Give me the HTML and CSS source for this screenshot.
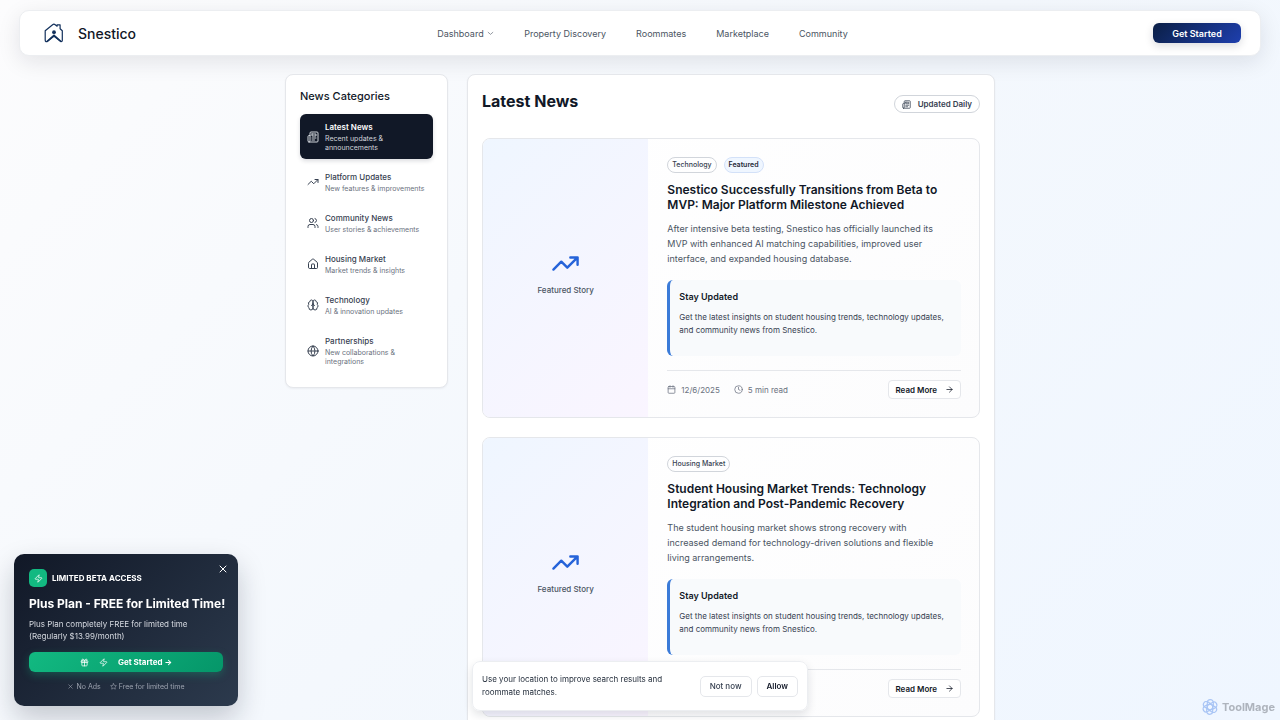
FILE: index.html
```html
<!DOCTYPE html>
<html lang="en">
<head>
    <meta charset="UTF-8">
    <meta name="viewport" content="width=device-width, initial-scale=1.0">
    <title>Latest News - Snestico</title>
    <link rel="stylesheet" href="styles.css">
</head>
<body>
    <!-- Icon sprite -->
    <svg class="sprite" aria-hidden="true">
        <symbol id="i-news" viewBox="0 0 24 24"><path d="M4 22h16a2 2 0 0 0 2-2V4a2 2 0 0 0-2-2H8a2 2 0 0 0-2 2v16a2 2 0 0 1-2 2Zm0 0a2 2 0 0 1-2-2v-9c0-1.1.9-2 2-2h2M18 14h-8M15 18h-5M10 6h8v4h-8V6Z"/></symbol>
        <symbol id="i-trend" viewBox="0 0 24 24"><path d="M22 7l-8.500 8.500-5-5L2 17M16 7h6v6"/></symbol>
        <symbol id="i-users" viewBox="0 0 24 24"><path d="M16 21v-2a4 4 0 0 0-4-4H6a4 4 0 0 0-4 4v2M22 21v-2a4 4 0 0 0-3-3.870M16 3.130a4 4 0 0 1 0 7.750"/><circle cx="9" cy="7" r="4"/></symbol>
        <symbol id="i-house" viewBox="0 0 24 24"><path d="M15 21v-8a1 1 0 0 0-1-1h-4a1 1 0 0 0-1 1v8M3 10a2 2 0 0 1 .709-1.528l7-5.999a2 2 0 0 1 2.582 0l7 5.999A2 2 0 0 1 21 10v9a2 2 0 0 1-2 2H5a2 2 0 0 1-2-2z"/></symbol>
        <symbol id="i-brain" viewBox="0 0 24 24"><path d="M12 5a3 3 0 1 0-5.997.125 4 4 0 0 0-2.526 5.770 4 4 0 0 0 .556 6.588A4 4 0 1 0 12 18ZM12 5a3 3 0 1 1 5.997.125 4 4 0 0 1 2.526 5.770 4 4 0 0 1-.556 6.588A4 4 0 1 1 12 18ZM15 13a4.500 4.500 0 0 1-3-4 4.500 4.500 0 0 1-3 4"/></symbol>
        <symbol id="i-globe" viewBox="0 0 24 24"><circle cx="12" cy="12" r="10"/><path d="M12 2a14.500 14.500 0 0 0 0 20 14.500 14.500 0 0 0 0-20M2 12h20"/></symbol>
        <symbol id="i-calendar" viewBox="0 0 24 24"><path d="M8 2v4M16 2v4M3 10h18"/><rect x="3" y="4" width="18" height="18" rx="2"/></symbol>
        <symbol id="i-clock" viewBox="0 0 24 24"><circle cx="12" cy="12" r="10"/><path d="M12 6v6l4 2"/></symbol>
        <symbol id="i-arrow" viewBox="0 0 24 24"><path d="M5 12h14M12 5l7 7-7 7"/></symbol>
        <symbol id="i-down" viewBox="0 0 24 24"><path d="M4 8l8 7 8-7"/></symbol>
        <symbol id="i-close" viewBox="0 0 24 24"><path d="M18 6L6 18M6 6l12 12"/></symbol>
        <symbol id="i-zap" viewBox="0 0 24 24"><path d="M4 14a1 1 0 0 1-.780-1.630l9.900-10.200a.5.5 0 0 1 .860.460l-1.920 6.020A1 1 0 0 0 13 10h7a1 1 0 0 1 .780 1.630l-9.900 10.200a.5.5 0 0 1-.860-.460l1.920-6.020A1 1 0 0 0 11 14z"/></symbol>
        <symbol id="i-gift" viewBox="0 0 24 24"><rect x="3" y="8" width="18" height="4" rx="1"/><path d="M12 8v13M19 12v7a2 2 0 0 1-2 2H7a2 2 0 0 1-2-2v-7M7.500 8a2.500 2.500 0 0 1 0-5A4.800 8 0 0 1 12 8a4.800 8 0 0 1 4.500-5 2.500 2.500 0 0 1 0 5"/></symbol>
        <symbol id="i-star" viewBox="0 0 24 24"><path d="M12 2l3.100 6.300 6.900 1-5 4.900 1.200 6.900L12 17.800l-6.200 3.300L7 14.200 2 9.300l6.900-1z"/></symbol>
    </svg>

    <header class="navbar">
        <a href="#" class="brand">
            <svg class="brand-logo" viewBox="0 0 20 20" aria-hidden="true">
                <path d="M1.200 7.800L8.600 1.700q1.300-1 2.600 0l1.900 1.500V1.800h3v3.900l2.200 2v9.500q0 1.700-1.500 1.400L10 12.600l-6.800 6q-2 .5-2-1.600z" fill="none" stroke="#12305c" stroke-width="1.200" stroke-linejoin="round"/>
                <path d="M2.400 17.900L10 11.300l7.600 6.600-1.500.9L10 13.900l-6.100 4.900z" fill="#12305c"/>
                <circle cx="10" cy="9.200" r="1.900" fill="#12305c"/>
            </svg>
            <span>Snestico</span>
        </a>
        <nav class="nav-links">
            <a href="#">Dashboard <svg class="icon icon-tiny"><use href="#i-down"/></svg></a>
            <a href="#">Property Discovery</a>
            <a href="#">Roommates</a>
            <a href="#">Marketplace</a>
            <a href="#">Community</a>
        </nav>
        <div class="nav-actions">
            <button type="button" class="btn-primary">Get Started</button>
        </div>
    </header>

    <div class="container">
        <aside class="sidebar">
            <h2>News Categories</h2>
            <button type="button" class="category active">
                <svg class="icon"><use href="#i-news"/></svg>
                <span><strong>Latest News</strong><small>Recent updates &amp; announcements</small></span>
            </button>
            <button type="button" class="category">
                <svg class="icon"><use href="#i-trend"/></svg>
                <span><strong>Platform Updates</strong><small>New features &amp; improvements</small></span>
            </button>
            <button type="button" class="category">
                <svg class="icon"><use href="#i-users"/></svg>
                <span><strong>Community News</strong><small>User stories &amp; achievements</small></span>
            </button>
            <button type="button" class="category">
                <svg class="icon"><use href="#i-house"/></svg>
                <span><strong>Housing Market</strong><small>Market trends &amp; insights</small></span>
            </button>
            <button type="button" class="category">
                <svg class="icon"><use href="#i-brain"/></svg>
                <span><strong>Technology</strong><small>AI &amp; innovation updates</small></span>
            </button>
            <button type="button" class="category">
                <svg class="icon"><use href="#i-globe"/></svg>
                <span><strong>Partnerships</strong><small>New collaborations &amp; integrations</small></span>
            </button>
        </aside>

        <main class="news">
            <div class="news-header">
                <h1>Latest News</h1>
                <span class="updated"><svg class="icon icon-small"><use href="#i-news"/></svg>Updated Daily</span>
            </div>

            <article class="story">
                <div class="story-cover">
                    <svg class="icon"><use href="#i-trend"/></svg>
                    <span>Featured Story</span>
                </div>
                <div class="story-body">
                    <div class="tags">
                        <span class="tag">Technology</span>
                        <span class="tag featured">Featured</span>
                    </div>
                    <h3>Snestico Successfully Transitions from Beta to MVP: Major Platform Milestone Achieved</h3>
                    <p class="summary">After intensive beta testing, Snestico has officially launched its MVP with enhanced AI matching capabilities, improved user interface, and expanded housing database.</p>
                    <div class="callout">
                        <h4>Stay Updated</h4>
                        <p>Get the latest insights on student housing trends, technology updates, and community news from Snestico.</p>
                    </div>
                    <div class="story-footer">
                        <span class="meta"><svg class="icon"><use href="#i-calendar"/></svg>12/6/2025</span>
                        <span class="meta"><svg class="icon"><use href="#i-clock"/></svg>5 min read</span>
                        <button type="button" class="read-more">Read More <svg class="icon"><use href="#i-arrow"/></svg></button>
                    </div>
                </div>
            </article>

            <article class="story">
                <div class="story-cover">
                    <svg class="icon"><use href="#i-trend"/></svg>
                    <span>Featured Story</span>
                </div>
                <div class="story-body">
                    <div class="tags">
                        <span class="tag">Housing Market</span>
                    </div>
                    <h3>Student Housing Market Trends: Technology Integration and Post-Pandemic Recovery</h3>
                    <p class="summary">The student housing market shows strong recovery with increased demand for technology-driven solutions and flexible living arrangements.</p>
                    <div class="callout">
                        <h4>Stay Updated</h4>
                        <p>Get the latest insights on student housing trends, technology updates, and community news from Snestico.</p>
                    </div>
                    <div class="story-footer">
                        <button type="button" class="read-more">Read More <svg class="icon"><use href="#i-arrow"/></svg></button>
                    </div>
                </div>
            </article>
        </main>
    </div>

    <!-- Beta promo -->
    <section class="promo">
        <button type="button" class="promo-close" aria-label="Close"><svg class="icon"><use href="#i-close"/></svg></button>
        <div class="promo-label">
            <span class="promo-icon"><svg class="icon icon-small"><use href="#i-zap"/></svg></span>
            LIMITED BETA ACCESS
        </div>
        <h2>Plus Plan - FREE for Limited Time!</h2>
        <p>Plus Plan completely FREE for limited time (Regularly $13.99/month)</p>
        <button type="button" class="promo-btn">
            <svg class="icon icon-small"><use href="#i-gift"/></svg>
            <svg class="icon icon-small"><use href="#i-zap"/></svg>
            <span>Get Started →</span>
        </button>
        <div class="promo-notes">
            <span><svg class="icon icon-tiny"><use href="#i-close"/></svg>No Ads</span>
            <span><svg class="icon icon-tiny"><use href="#i-star"/></svg>Free for limited time</span>
        </div>
    </section>

    <!-- Location prompt -->
    <div class="location" role="dialog" aria-label="Location">
        <p>Use your location to improve search results and roommate matches.</p>
        <button type="button">Not now</button>
        <button type="button" class="allow">Allow</button>
    </div>

    <div class="watermark">
        <svg viewBox="0 0 24 24" aria-hidden="true">
            <g fill="none" stroke="currentColor" stroke-width="1.800">
                <path id="petal" d="M12 7l5 3V5.500A4.500 4.500 0 0 0 8 5.500V14"/>
                <use href="#petal" transform="rotate(60 12 12)"/>
                <use href="#petal" transform="rotate(120 12 12)"/>
                <use href="#petal" transform="rotate(180 12 12)"/>
                <use href="#petal" transform="rotate(240 12 12)"/>
                <use href="#petal" transform="rotate(300 12 12)"/>
            </g>
        </svg>
        ToolMage
    </div>
</body>
</html>
```
FILE: styles.css
```css
* {
    box-sizing: border-box;
}

body {
    margin: 0;
    min-height: 100vh;
    font-family: Inter, "Liberation Sans", sans-serif;
    font-size: 9px;
    color: #111827;
    background: linear-gradient(135deg, #fcfcfd 0%, #f4f8fd 50%, #eff6ff 100%) fixed;
}

h1, h2, h3, h4, p {
    margin: 0;
}

button {
    font-family: inherit;
    cursor: pointer;
}

a {
    color: inherit;
    text-decoration: none;
}

.sprite {
    position: absolute;
    width: 0;
    height: 0;
}

.icon {
    width: 12px;
    height: 12px;
    flex-shrink: 0;
    fill: none;
    stroke: currentColor;
    stroke-width: 2;
    stroke-linecap: round;
    stroke-linejoin: round;
}

.icon-small {
    width: 9px;
    height: 9px;
}

.icon-tiny {
    width: 7px;
    height: 7px;
}

/* Navbar */
.navbar {
    display: grid;
    grid-template-columns: 1fr auto 1fr;
    align-items: center;
    height: 46px;
    margin: 10px 19px 18px;
    padding: 0 19px 0 24px;
    background: #fff;
    border: 1px solid #eceef1;
    border-radius: 10px;
    box-shadow: 0 6px 22px rgba(15, 23, 42, 0.1);
}

.brand {
    display: flex;
    align-items: center;
    gap: 14px;
    font-size: 14px;
    font-weight: 500;
}

.brand-logo {
    width: 20px;
    height: 20px;
}

.nav-links {
    display: flex;
    gap: 30px;
    color: #4b5563;
}

.nav-links .icon {
    margin-left: 1px;
}

.nav-actions {
    display: flex;
    justify-content: flex-end;
}

.btn-primary {
    width: 88px;
    height: 20px;
    padding: 0;
    border: 0;
    border-radius: 6px;
    background: linear-gradient(135deg, #0b1f45, #1e3fae);
    color: #fff;
    font-size: 9px;
    font-weight: 600;
    box-shadow: 0 3px 8px rgba(15, 23, 42, 0.15);
}

/* Layout */
.container {
    display: grid;
    grid-template-columns: 163px 1fr;
    align-items: start;
    gap: 19px;
    max-width: 710px;
    margin: 0 auto;
}

.sidebar,
.news {
    padding: 14px;
    background: #fff;
    border: 1px solid #e5e7eb;
    border-radius: 8px;
    box-shadow: 0 1px 2px rgba(15, 23, 42, 0.05);
}

/* Sidebar */
.sidebar {
    display: flex;
    flex-direction: column;
    gap: 5px;
}

.sidebar h2 {
    margin-bottom: 5px;
    font-size: 11px;
    line-height: 15px;
    font-weight: 500;
}

.category {
    display: flex;
    align-items: center;
    gap: 6px;
    padding: 7px;
    border: 0;
    border-radius: 6px;
    background: none;
    color: #374151;
    text-align: left;
}

.category strong,
.category small {
    display: block;
}

.category strong {
    font-size: 8px;
    line-height: 13px;
    font-weight: 500;
}

.category small {
    font-size: 7px;
    line-height: 9px;
    color: #6b7280;
}

.category.active {
    background: #111827;
    color: #fff;
    box-shadow: 0 2px 4px rgba(15, 23, 42, 0.15);
}

.category.active strong {
    font-weight: 600;
}

.category.active small,
.category.active .icon {
    color: #d1d5db;
}

/* News list */
.news-header {
    display: flex;
    align-items: center;
    justify-content: space-between;
    margin-bottom: 19px;
    height: 30px;
}

.news-header h1 {
    align-self: flex-start;
    font-size: 16px;
    line-height: 24px;
    font-weight: 700;
}

.updated {
    display: flex;
    align-items: center;
    gap: 7px;
    height: 18px;
    padding: 0 7px;
    border: 1px solid #d1d5db;
    border-radius: 9px;
    color: #374151;
    font-size: 8px;
    font-weight: 600;
}

.story {
    display: grid;
    grid-template-columns: 1fr 2fr;
    border: 1px solid #e5e7eb;
    border-radius: 8px;
    overflow: hidden;
    background: linear-gradient(135deg, #fff, #fcfcfd);
}

.story + .story {
    margin-top: 19px;
}

.story-cover {
    display: flex;
    flex-direction: column;
    align-items: center;
    justify-content: center;
    gap: 6px;
    padding-bottom: 10px;
    background: linear-gradient(135deg, #eff6ff, #faf5ff);
    color: #4b5563;
    font-size: 8px;
    line-height: 13px;
    font-weight: 500;
}

.story-cover .icon {
    width: 29px;
    height: 29px;
    color: #2563d9;
}

.story-body {
    padding: 18px 18px 18px 19px;
}

.tags {
    display: flex;
    gap: 7px;
}

.tag {
    height: 16px;
    padding: 0 4px;
    border: 1px solid #d1d5db;
    border-radius: 8px;
    color: #374151;
    font-size: 7px;
    line-height: 14px;
    font-weight: 500;
}

.tag.featured {
    background: #eff6ff;
    border-color: #d3e1f8;
    color: #1f2937;
    font-weight: 600;
}

.story h3 {
    margin-top: 9px;
    font-size: 12px;
    line-height: 15px;
    font-weight: 600;
}

.summary {
    margin-top: 9px;
    padding-right: 14px;
    color: #4b5563;
    font-size: 9px;
    line-height: 15px;
}

.callout {
    margin-top: 14px;
    padding: 10px 9px 19px;
    border-left: 3px solid #3b7bd8;
    border-radius: 6px;
    background: #f8fafc;
}

.callout h4 {
    font-size: 9px;
    line-height: 14px;
    font-weight: 600;
}

.callout p {
    margin-top: 7px;
    color: #374151;
    font-size: 8px;
    line-height: 13px;
}

.story-footer {
    display: flex;
    align-items: center;
    gap: 14px;
    margin-top: 14px;
    padding-top: 9px;
    border-top: 1px solid #e5e7eb;
}

.meta {
    display: flex;
    align-items: center;
    gap: 5px;
    color: #6b7280;
    font-size: 8px;
}

.meta .icon,
.read-more .icon {
    width: 9px;
    height: 9px;
}

.read-more {
    display: flex;
    align-items: center;
    gap: 8px;
    height: 19px;
    margin-left: auto;
    padding: 0 6px;
    border: 1px solid #e5e7eb;
    border-radius: 4px;
    background: #fff;
    color: #111827;
    font-size: 8px;
    font-weight: 600;
}

/* Promo */
.promo {
    position: fixed;
    left: 14px;
    bottom: 14px;
    width: 224px;
    padding: 15px 15px 14px;
    border-radius: 10px;
    background: linear-gradient(135deg, #111827, #2c3a4d);
    color: #fff;
    box-shadow: 0 12px 28px rgba(15, 23, 42, 0.22);
}

.promo-close {
    position: absolute;
    top: 9px;
    right: 9px;
    display: flex;
    padding: 0;
    border: 0;
    background: none;
    color: #fff;
}

.promo-label {
    display: flex;
    align-items: center;
    gap: 5px;
    font-size: 8px;
    font-weight: 700;
}

.promo-icon {
    display: flex;
    align-items: center;
    justify-content: center;
    width: 18px;
    height: 18px;
    border-radius: 5px;
    background: #12b981;
}

.promo h2 {
    margin-top: 9px;
    font-size: 12px;
    line-height: 16px;
    font-weight: 700;
    white-space: nowrap;
}

.promo p {
    margin-top: 6px;
    color: #d7dbe2;
    font-size: 8px;
    line-height: 12px;
}

.promo-btn {
    display: flex;
    align-items: center;
    justify-content: center;
    gap: 10px;
    width: 100%;
    height: 20px;
    margin-top: 10px;
    padding: 0;
    border: 0;
    border-radius: 6px;
    background: linear-gradient(135deg, #12b981, #059669);
    color: #fff;
    font-size: 8px;
    font-weight: 700;
    box-shadow: 0 3px 9px rgba(16, 185, 129, 0.3);
}

.promo-notes {
    display: flex;
    justify-content: center;
    gap: 9px;
    margin-top: 9px;
    color: #9ca3af;
    font-size: 7px;
    line-height: 11px;
}

.promo-notes span {
    display: flex;
    align-items: center;
    gap: 2px;
}

/* Location prompt */
.location {
    position: fixed;
    left: 50%;
    bottom: 9px;
    display: flex;
    align-items: center;
    gap: 5px;
    width: 336px;
    height: 50px;
    padding: 0 9px;
    transform: translateX(-50%);
    border: 1px solid #eceef1;
    border-radius: 8px;
    background: rgba(255, 255, 255, 0.98);
    box-shadow: 0 4px 10px rgba(15, 23, 42, 0.12);
}

.location p {
    flex: 1;
    padding-right: 20px;
    color: #1f2937;
    font-size: 8px;
    line-height: 13px;
}

.location button {
    height: 21px;
    padding: 0 9px;
    border: 1px solid #e5e7eb;
    border-radius: 5px;
    background: #fff;
    color: #374151;
    font-size: 8px;
    font-weight: 500;
}

.location .allow {
    color: #111827;
    font-weight: 600;
}

.watermark {
    position: fixed;
    right: 5px;
    bottom: 5px;
    display: flex;
    align-items: center;
    gap: 4px;
    color: #aeb4bd;
    font-size: 11px;
    line-height: 16px;
    font-weight: 700;
}

.watermark svg {
    width: 16px;
    height: 16px;
    color: #a9c5f5;
}
```
